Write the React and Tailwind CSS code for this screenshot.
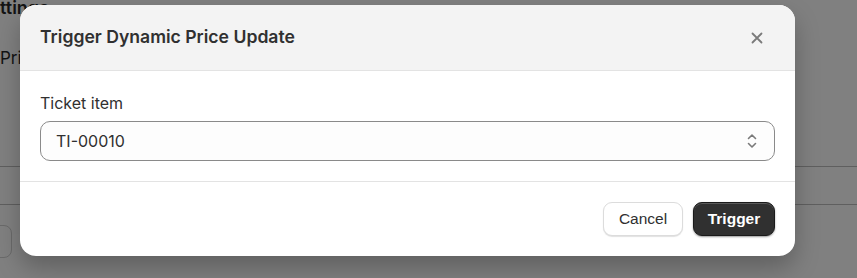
import React from 'react';

function CloseIcon() {
  return (
    <svg width="12" height="12" viewBox="0 0 12 12" fill="none" stroke="#7a7a7a" strokeWidth="1.8" strokeLinecap="round">
      <path d="M1.5 1.5l9 9M10.5 1.5l-9 9" />
    </svg>
  );
}

function SelectIcon() {
  return (
    <svg width="12" height="18" viewBox="0 0 12 18" fill="none" stroke="#7a7a7a" strokeWidth="1.6" strokeLinecap="round" strokeLinejoin="round">
      <path d="M2.5 6.5L6 3l3.5 3.5M2.5 11.5L6 15l3.5-3.5" />
    </svg>
  );
}

export default function App() {
  return (
    <div className="relative h-[278px] w-full overflow-hidden bg-[#808080]" style={{ fontFamily: 'Inter, "Noto Sans", sans-serif' }}>
      {/* page behind the overlay */}
      <div className="flex flex-col">
        <div className="-mt-[2px] h-[20px] text-[18px] leading-[20px] font-semibold text-[#141414]">ttings</div>
        <div className="pt-[28px] text-[17px] leading-[24px] text-[#141414]">Pric</div>
        <div className="mt-[96px] border-t border-[#5f5f5f]" />
        <div className="mt-[37px] border-t border-[#5f5f5f]" />
        <div className="mt-[20px] -ml-[30px] h-[33px] w-[42px] rounded-[8px] border border-[#6a6a6a]" />
      </div>

      {/* modal */}
      <div className="absolute left-[20px] top-[5px] flex w-[775px] flex-col overflow-hidden rounded-[16px] bg-white shadow-[0_12px_24px_rgba(0,0,0,0.25)]">
        <div className="flex h-[66px] items-center justify-between border-b border-[#e3e3e3] bg-[#f3f3f3] pl-[20px] pr-[26px]">
          <h2 className="text-[17.6px] font-semibold text-[#303030]">Trigger Dynamic Price Update</h2>
          <button className="flex h-6 w-6 items-center justify-center">
            <CloseIcon />
          </button>
        </div>
        <div className="flex flex-col px-[20px] pb-[20px] pt-[22px]">
          <label className="mb-[8px] text-[16px] leading-[20px] text-[#303030]">Ticket item</label>
          <div className="flex h-[40px] items-center justify-between rounded-[10px] border border-[#8a8a8a] bg-[#fdfdfd] pl-[15px] pr-[16px]">
            <span className="text-[16px] text-[#303030]">TI-00010</span>
            <SelectIcon />
          </div>
        </div>
        <div className="flex h-[75px] items-center justify-end gap-[10px] border-t border-[#e3e3e3] px-[20px]">
          <button className="h-[34px] w-[80px] rounded-[9px] border border-[#dcdcdc] bg-white text-[15.5px] font-medium text-[#303030] shadow-[0_1px_1px_rgba(0,0,0,0.12)]" style={{ fontFamily: '"Liberation Sans", Arial, sans-serif' }}>
            Cancel
          </button>
          <button className="h-[34px] w-[82px] rounded-[9px] border border-[#1a1a1a] bg-[#303030] text-[15.5px] font-bold text-white shadow-[inset_0_1px_0_rgba(255,255,255,0.2),0_1px_2px_rgba(0,0,0,0.4)]" style={{ fontFamily: '"Liberation Sans", Arial, sans-serif' }}>
            Trigger
          </button>
        </div>
      </div>
    </div>
  );
}
